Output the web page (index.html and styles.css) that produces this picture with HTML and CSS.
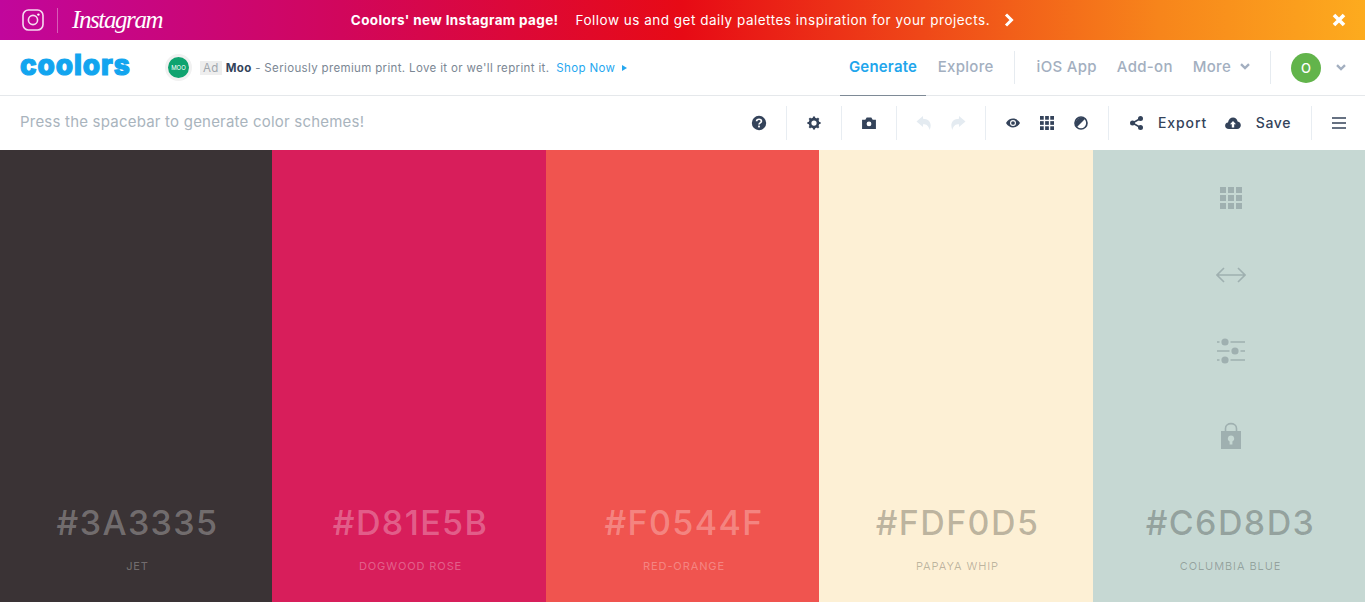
FILE: index.html
```html
<!DOCTYPE html>
<html lang="en">
<head>
    <meta charset="UTF-8">
    <meta name="viewport" content="width=device-width, initial-scale=1.0">
    <title>Coolors | The super fast color schemes generator</title>
    <link rel="stylesheet" href="styles.css">
</head>
<body>
    <div class="promo">
        <div class="promo-brand">
            <svg class="promo-glyph" viewBox="0 0 22 22" width="22" height="22">
                <rect x="1" y="1" width="20" height="20" rx="5.5" fill="none" stroke="#fff" stroke-width="1.6" opacity="0.85"/>
                <circle cx="11" cy="11" r="4.6" fill="none" stroke="#fff" stroke-width="1.6" opacity="0.85"/>
                <circle cx="16.4" cy="5.6" r="1.2" fill="#fff"/>
            </svg>
            <span class="promo-divider"></span>
            <span class="promo-name">Instagram</span>
        </div>
        <div class="promo-message">
            <strong>Coolors' new Instagram page!</strong>
            <span>Follow us and get daily palettes inspiration for your projects.</span>
            <svg viewBox="0 0 10 14" width="10" height="14">
                <path d="M2 1.5 L7.5 7 L2 12.5" fill="none" stroke="#fff" stroke-width="3"/>
            </svg>
        </div>
        <div class="promo-close">
            <svg viewBox="0 0 14 14" width="14" height="14">
                <path d="M2 2 L12 12 M12 2 L2 12" stroke="#fff" stroke-width="3.6"/>
            </svg>
        </div>
    </div>

    <nav class="nav">
        <a class="logo">coolors</a>
        <div class="ad">
            <span class="ad-logo"><span>MOO</span></span>
            <span class="ad-tag">Ad</span>
            <span class="ad-text"><b>Moo</b> - Seriously premium print. Love it or we'll reprint it.</span>
            <a class="ad-link">Shop Now</a>
            <span class="ad-arrow"></span>
        </div>
        <div class="nav-right">
            <div class="nav-group nav-main">
                <a class="nav-link active">Generate</a>
                <a class="nav-link">Explore</a>
            </div>
            <div class="nav-group nav-more">
                <a class="nav-link">iOS App</a>
                <a class="nav-link">Add-on</a>
                <a class="nav-link">More
                    <svg class="chevron" viewBox="0 0 10 7" width="10" height="7"><path d="M1 1.2 L5 5 L9 1.2" fill="none" stroke="#a3afc0" stroke-width="2.4"/></svg>
                </a>
            </div>
            <div class="nav-user">
                <span class="avatar">O</span>
                <svg class="chevron" viewBox="0 0 10 7" width="10" height="7"><path d="M1 1.2 L5 5 L9 1.2" fill="none" stroke="#a3afc0" stroke-width="2.4"/></svg>
            </div>
        </div>
    </nav>

    <div class="toolbar">
        <p class="hint">Press the spacebar to generate color schemes!</p>
        <div class="tools">
            <div class="tool-group">
                <button class="tool">
                    <svg viewBox="0 0 16 16" width="16" height="16">
                        <circle cx="8" cy="8" r="7.2" fill="#34435a"/>
                        <path d="M5.6 6.2 C5.7 3.6 10.4 3.6 10.4 6.2 C10.4 7.9 8 7.8 8 9.6" fill="none" stroke="#fff" stroke-width="1.7"/>
                        <rect x="7.1" y="10.6" width="1.8" height="1.8" fill="#fff"/>
                    </svg>
                </button>
            </div>
            <div class="tool-group">
                <button class="tool">
                    <svg viewBox="0 0 16 16" width="14" height="14">
                        <circle cx="8" cy="8" r="4.6" fill="none" stroke="#34435a" stroke-width="3.2"/>
                        <path d="M8 0.5 V15.5 M0.5 8 H15.5 M2.7 2.7 L13.3 13.3 M13.3 2.7 L2.7 13.3" stroke="#34435a" stroke-width="2.4" stroke-dasharray="2.6 9.8 2.6"/>
                    </svg>
                </button>
            </div>
            <div class="tool-group">
                <button class="tool">
                    <svg viewBox="0 0 15 13" width="14" height="12">
                        <path d="M0 3 H3.5 L5 0.5 H10 L11.5 3 H15 V13 H0 Z" fill="#34435a"/>
                        <circle cx="7.5" cy="7.5" r="2.6" fill="#fff"/>
                    </svg>
                </button>
            </div>
            <div class="tool-group">
                <button class="tool">
                    <svg viewBox="0 0 15 14" width="16" height="14">
                        <path d="M6.5 0 L0 5.6 L6.5 11 V8.2 C10 8.2 12 9.4 13.2 14 C16 7 12.5 3 6.5 2.8 Z" fill="#e4ebf1"/>
                    </svg>
                </button>
                <button class="tool">
                    <svg viewBox="0 0 15 14" width="16" height="14">
                        <path d="M8.5 0 L15 5.6 L8.5 11 V8.2 C5 8.2 3 9.4 1.8 14 C-1 7 2.5 3 8.5 2.8 Z" fill="#e4ebf1"/>
                    </svg>
                </button>
            </div>
            <div class="tool-group">
                <button class="tool">
                    <svg viewBox="0 0 15 10" width="14" height="10">
                        <path d="M0 5 C3.5 -1.4 11.5 -1.4 15 5 C11.5 11.4 3.5 11.4 0 5 Z" fill="#34435a"/>
                        <circle cx="7.5" cy="5" r="3.2" fill="#fff"/>
                        <circle cx="7.5" cy="5" r="2" fill="#34435a"/>
                    </svg>
                </button>
                <button class="tool">
                    <svg viewBox="0 0 15 15" width="14" height="14" fill="#34435a">
                        <rect x="0" y="0" width="4" height="4"/><rect x="5.5" y="0" width="4" height="4"/><rect x="11" y="0" width="4" height="4"/>
                        <rect x="0" y="5.5" width="4" height="4"/><rect x="5.5" y="5.5" width="4" height="4"/><rect x="11" y="5.5" width="4" height="4"/>
                        <rect x="0" y="11" width="4" height="4"/><rect x="5.5" y="11" width="4" height="4"/><rect x="11" y="11" width="4" height="4"/>
                    </svg>
                </button>
                <button class="tool">
                    <svg viewBox="0 0 15 15" width="14" height="14">
                        <circle cx="7.5" cy="7.5" r="6.4" fill="#fff" stroke="#34435a" stroke-width="1.8"/>
                        <path d="M12 3 A6.4 6.4 0 0 0 3 12 Z" fill="#34435a"/>
                    </svg>
                </button>
            </div>
            <div class="tool-group tool-actions">
                <button class="action action-export">
                    <svg viewBox="0 0 13 14" width="13" height="14">
                        <path d="M10.5 2.5 L2.5 7 L10.5 11.5" fill="none" stroke="#34435a" stroke-width="1.6"/>
                        <circle cx="10.5" cy="2.5" r="2.5" fill="#34435a"/>
                        <circle cx="2.5" cy="7" r="2.5" fill="#34435a"/>
                        <circle cx="10.5" cy="11.5" r="2.5" fill="#34435a"/>
                    </svg>
                    <span>Export</span>
                </button>
                <button class="action">
                    <svg viewBox="0 0 16 12" width="16" height="12">
                        <path d="M4 12 C-1 12 -1 6 3 5.6 C3.6 -0.8 11.6 -1.4 12.6 4.6 C17 5 17 12 12 12 Z" fill="#34435a"/>
                        <path d="M8 4 L11 7.2 H9.2 V10.5 H6.8 V7.2 H5 Z" fill="#fff"/>
                    </svg>
                    <span>Save</span>
                </button>
            </div>
            <div class="tool-group tool-menu">
                <button class="tool">
                    <svg viewBox="0 0 14 12" width="14" height="12">
                        <path d="M0 1 H14 M0 6 H14 M0 11 H14" stroke="#34435a" stroke-width="1.6"/>
                    </svg>
                </button>
            </div>
        </div>
    </div>

    <main class="palette">
        <section class="swatch swatch-dark swatch-jet">
            <h2 class="hex">#3A3335</h2>
            <p class="name">Jet</p>
        </section>
        <section class="swatch swatch-dark swatch-rose">
            <h2 class="hex">#D81E5B</h2>
            <p class="name">Dogwood Rose</p>
        </section>
        <section class="swatch swatch-dark swatch-orange">
            <h2 class="hex">#F0544F</h2>
            <p class="name">Red-Orange</p>
        </section>
        <section class="swatch swatch-light swatch-papaya">
            <h2 class="hex">#FDF0D5</h2>
            <p class="name">Papaya Whip</p>
        </section>
        <section class="swatch swatch-light swatch-blue">
            <div class="swatch-tools">
                <svg viewBox="0 0 22 22" width="22" height="22" fill="#9fb0b0">
                    <rect x="0" y="0" width="6" height="6"/><rect x="8" y="0" width="6" height="6"/><rect x="16" y="0" width="6" height="6"/>
                    <rect x="0" y="8" width="6" height="6"/><rect x="8" y="8" width="6" height="6"/><rect x="16" y="8" width="6" height="6"/>
                    <rect x="0" y="16" width="6" height="6"/><rect x="8" y="16" width="6" height="6"/><rect x="16" y="16" width="6" height="6"/>
                </svg>
                <svg viewBox="0 0 30 16" width="30" height="16">
                    <path d="M8 1 L1 8 L8 15 M22 1 L29 8 L22 15 M1 8 H29" fill="none" stroke="#9fb0b0" stroke-width="1.6"/>
                </svg>
                <svg viewBox="0 0 28 28" width="28" height="28" fill="#9fb0b0">
                    <path d="M0 5 H28 M0 14 H28 M0 23 H28" stroke="#9fb0b0" stroke-width="1.5"/>
                    <circle cx="8" cy="5" r="4.6" stroke="#c6d8d3" stroke-width="2"/>
                    <circle cx="18" cy="14" r="4.6" stroke="#c6d8d3" stroke-width="2"/>
                    <circle cx="8" cy="23" r="4.6" stroke="#c6d8d3" stroke-width="2"/>
                </svg>
                <svg viewBox="0 0 20 28" width="20" height="28">
                    <path d="M4.5 9 V6.5 C4.5 0 15.5 0 15.5 6.5 V9" fill="none" stroke="#9fb0b0" stroke-width="1.6"/>
                    <path d="M0 9 H20 V27 H0 Z M10 13.5 A3.2 3.2 0 0 0 8.6 19.6 V22.5 H11.4 V19.6 A3.2 3.2 0 0 0 10 13.5 Z" fill="#9fb0b0" fill-rule="evenodd"/>
                </svg>
            </div>
            <h2 class="hex">#C6D8D3</h2>
            <p class="name">Columbia Blue</p>
        </section>
    </main>
</body>
</html>
```

FILE: styles.css
```css
* {
    box-sizing: border-box;
}

html, body {
    height: 100%;
}

body {
    margin: 0;
    font-family: Inter, "Open Sans", Arial, sans-serif;
    display: flex;
    flex-direction: column;
    overflow: hidden;
    background: #fff;
}

/* promo banner */
.promo {
    flex: 0 0 40px;
    display: grid;
    grid-template-columns: 1fr auto 1fr;
    align-items: center;
    color: #fff;
    background: linear-gradient(90deg, #c1069c 0, #d1065c 25%, #e70a15 50%, #f7851b 85%, #fdab1e 100%);
}

.promo-brand {
    display: flex;
    align-items: center;
    padding-left: 22px;
}

.promo-divider {
    width: 1px;
    height: 25px;
    margin: 0 14px 0 13px;
    background: rgba(255,255,255,0.35);
}

.promo-name {
    font-family: "Liberation Serif", serif;
    font-style: italic;
    font-size: 25px;
    letter-spacing: -1.4px;
}

.promo-message {
    display: flex;
    align-items: center;
    font-size: 13.5px;
    letter-spacing: 0.5px;
}

.promo-message strong {
    font-weight: 700;
    letter-spacing: 0.36px;
    margin-right: 17px;
}

.promo-message svg {
    margin-left: 14px;
}

.promo-close {
    display: flex;
    justify-content: flex-end;
    padding-right: 19px;
}

/* main nav */
.nav {
    flex: 0 0 56px;
    display: flex;
    align-items: center;
    border-bottom: 1px solid #e5e8eb;
}

.logo {
    width: 165px;
    padding-left: 20px;
    font-size: 28px;
    font-weight: 800;
    line-height: 1;
    color: #12a5ef;
    -webkit-text-stroke: 1.2px #12a5ef;
    letter-spacing: 0.9px;
    margin-top: -6px;
}

.ad {
    display: flex;
    align-items: center;
    font-size: 11.5px;
    letter-spacing: 0.35px;
    color: #7b8794;
}

.ad-logo {
    width: 27px;
    height: 27px;
    margin: 0 8px 0 0;
    border: 3px solid #f1f1f1;
    border-radius: 50%;
    background: #0fa36f;
    display: flex;
    align-items: center;
    justify-content: center;
}

.ad-logo span {
    font-size: 6px;
    letter-spacing: 0;
    color: #fff;
}

.ad-tag {
    padding: 0 3px;
    margin-right: 4px;
    line-height: 14px;
    color: #a0a6ad;
    background: #eee;
}

.ad-text b {
    color: #34435a;
    font-weight: 700;
}

.ad-link {
    margin-left: 7px;
    color: #26a7ef;
}

.ad-arrow {
    width: 0;
    height: 0;
    margin-left: 7px;
    border-left: 5px solid #26a7ef;
    border-top: 3.5px solid transparent;
    border-bottom: 3.5px solid transparent;
}

.nav-right {
    display: flex;
    align-items: center;
    align-self: stretch;
    margin-left: auto;
}

.nav-group {
    display: flex;
    align-items: center;
    align-self: stretch;
    position: relative;
}

.nav-main {
    padding-right: 21px;
}

.nav-main::after, .nav-more::after {
    content: "";
    position: absolute;
    right: 0;
    top: 11px;
    width: 1px;
    height: 33px;
    background: #e6ebf0;
}

.nav-more {
    padding: 0 21px 0 22px;
    gap: 20px;
}

.nav-link {
    font-size: 15px;
    font-weight: 500;
    letter-spacing: 0.3px;
    color: #a3afc0;
    display: flex;
    align-items: center;
    align-self: stretch;
    padding-bottom: 2px;
}

.nav-main .nav-link {
    padding: 0 8.5px 2px;
    position: relative;
}

.nav-main .nav-link + .nav-link {
    padding: 0 0 2px;
    margin-left: 12px;
}

.nav-link.active {
    color: #1fa6ec;
    font-weight: 600;
    letter-spacing: 0.2px;
    margin-bottom: -1px;
    border-bottom: 1px solid #7e8a96;
}

.chevron {
    margin-left: 9px;
}

.nav-user {
    display: flex;
    align-items: center;
    padding: 0 19px 0 20px;
}

.avatar {
    width: 30px;
    height: 30px;
    border-radius: 50%;
    background: #62b44b;
    color: #fff;
    font-size: 13px;
    font-weight: 500;
    display: flex;
    align-items: center;
    justify-content: center;
}

.nav-user .chevron {
    margin-left: 15px;
}

/* toolbar */
.toolbar {
    flex: 0 0 54px;
    display: flex;
    align-items: center;
    justify-content: space-between;
    padding-left: 20px;
}

.hint {
    margin: -3px 0 0;
    font-size: 15px;
    letter-spacing: 0.21px;
    color: #a9b4bd;
}

.tools {
    display: flex;
    align-items: center;
    margin-top: -1px;
}

.tool-group {
    display: flex;
    height: 34px;
    padding: 0 10px;
    border-right: 1px solid #e8edf2;
}

.tool-actions {
    width: 203px;
    padding: 0 20px 0 21px;
    justify-content: space-between;
}

.tool-menu {
    width: 53px;
    border-right: 0;
}

.tool, .action {
    padding: 0;
    border: 0;
    background: none;
    display: flex;
    align-items: center;
}

.tool {
    width: 34px;
    justify-content: center;
}

.action {
    gap: 15px;
    font-family: inherit;
    font-size: 14px;
    font-weight: 500;
    letter-spacing: 0.6px;
    color: #34435a;
}

.action-export {
    letter-spacing: 0.9px;
}

/* colour columns */
.palette {
    flex: 1;
    display: grid;
    grid-template-columns: 272px 274px 273px 274px 1fr;
    min-height: 0;
}

.swatch {
    display: flex;
    flex-direction: column;
    align-items: center;
    padding: 0 0 29px 3px;
}

.swatch-jet { background: #3a3335; }
.swatch-rose { background: #d81e5b; }
.swatch-orange { background: #f0544f; }
.swatch-papaya { background: #fdf0d5; }
.swatch-blue { background: #c6d8d3; }

.swatch-dark { color: rgba(255,255,255,0.3); }
.swatch-light { color: rgba(0,0,0,0.26); }

.swatch-tools {
    display: flex;
    flex-direction: column;
    align-items: center;
    padding-top: 37px;
}

.swatch-tools svg:nth-child(2) { margin-top: 58px; }
.swatch-tools svg:nth-child(3) { margin-top: 54px; }
.swatch-tools svg:nth-child(4) { margin-top: 57px; }

.hex {
    margin: auto 0 0;
    font-size: 34px;
    font-weight: 500;
    line-height: 40px;
    letter-spacing: 1.4px;
}

.name {
    margin: 16px 0 0;
    font-size: 11px;
    line-height: 14px;
    letter-spacing: 0.9px;
    text-transform: uppercase;
}
```
